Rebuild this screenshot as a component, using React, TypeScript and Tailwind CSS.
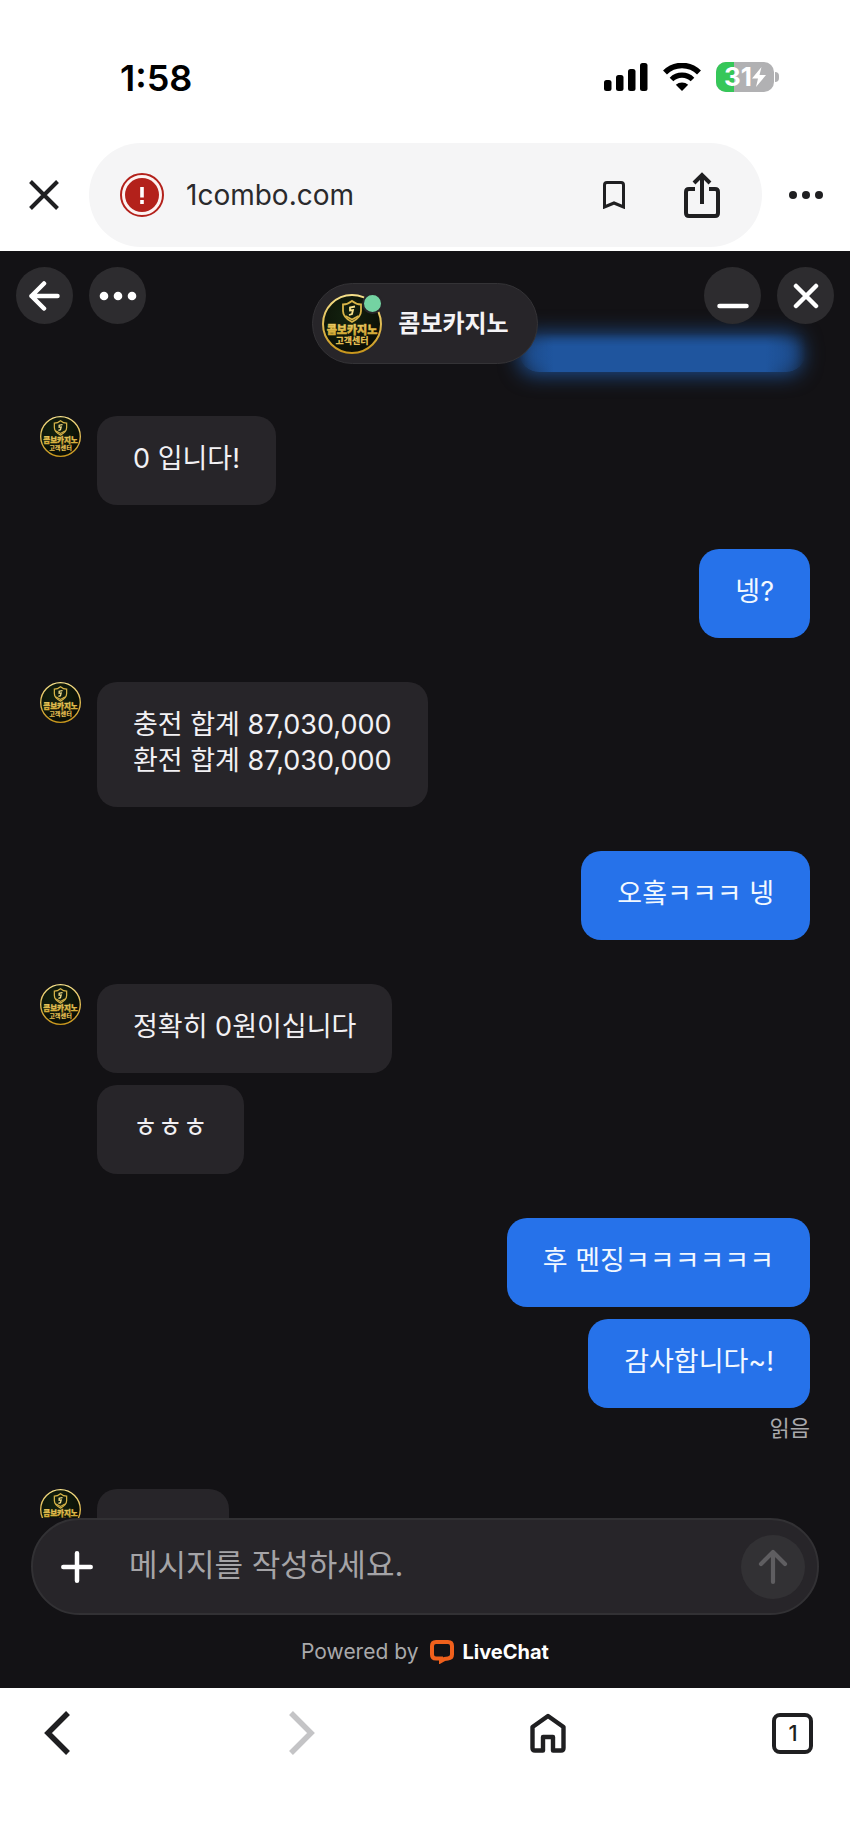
import { useState } from 'react'

type Group = {
  id: number
  from: 'agent' | 'me'
  messages: string[]
  read?: boolean
  pending?: boolean
}

const groups: Group[] = [
  { id: 1, from: 'agent', messages: ['0 입니다!'] },
  { id: 2, from: 'me', messages: ['넹?'] },
  { id: 3, from: 'agent', messages: ['충전 합계 87,030,000\n환전 합계 87,030,000'] },
  { id: 4, from: 'me', messages: ['오홐ㅋㅋㅋ 넹'] },
  { id: 5, from: 'agent', messages: ['정확히 0원이십니다', 'ㅎㅎㅎ'] },
  { id: 6, from: 'me', messages: ['후 멘징ㅋㅋㅋㅋㅋㅋ', '감사합니다~!'], read: true },
  { id: 7, from: 'agent', messages: [], pending: true },
]

function Avatar({ className }: { className: string }) {
  return (
    <svg viewBox="0 0 60 60" className={className} aria-hidden="true">
      <defs>
        <linearGradient id="gold" x1="0" y1="0" x2="0" y2="1">
          <stop offset="0" stopColor="#f6e08a" />
          <stop offset="1" stopColor="#c8961c" />
        </linearGradient>
        <radialGradient id="felt" cx="0.4" cy="0.35" r="0.7">
          <stop offset="0" stopColor="#13220f" />
          <stop offset="1" stopColor="#0a0d05" />
        </radialGradient>
      </defs>
      <circle cx="30" cy="30" r="29" fill="url(#felt)" stroke="url(#gold)" strokeWidth="2" />
      <path d="M30 7 C27 9.500 24 10.500 21 10.500 V17 C21 22 25 25.500 30 28 C35 25.500 39 22 39 17 V10.500 C36 10.500 33 9.500 30 7 Z" fill="none" stroke="#d9b548" strokeWidth="1.800" />
      <path d="M33 12.500 L28 13.500 V16.500 L31 16 L30 20 L27 21" fill="none" stroke="#f6e08a" strokeWidth="1.800" />
      <path d="M23.500 22 L30 25.500 L36.500 22" fill="none" stroke="#d9b548" strokeWidth="1.600" />
      <text x="30" y="40" textAnchor="middle" fontSize="11" fill="url(#gold)" stroke="#dcb540" strokeWidth="0.500" className="font-['Noto_Sans_CJK_KR',sans-serif] font-black">
        콤보카지노
      </text>
      <text x="30" y="50" textAnchor="middle" fontSize="9" fill="#e3bd52" className="font-['Noto_Sans_CJK_KR',sans-serif] font-black">
        고객센터
      </text>
    </svg>
  )
}

function StatusBar() {
  return (
    <div className="flex h-[143px] shrink-0 items-start justify-between pt-[58px] pr-[71px] pl-[120px]">
      <span className="text-[36px] leading-10 font-semibold text-black">1:58</span>
      <div className="flex h-[38px] items-center gap-[15px]">
        <svg viewBox="0 0 44 28" className="h-7 w-11" fill="#000">
          <rect x="0" y="17" width="7.500" height="11" rx="2.500" />
          <rect x="12" y="12" width="7.500" height="16" rx="2.500" />
          <rect x="24" y="6" width="7.500" height="22" rx="2.500" />
          <rect x="36" y="0" width="7.500" height="28" rx="2.500" />
        </svg>
        <svg viewBox="0 0 38 28" className="h-7 w-[38px]">
          <path d="M2 9.500 A24 24 0 0 1 36 9.500" fill="none" stroke="#000" strokeWidth="5.500" />
          <path d="M8.500 16.500 A15 15 0 0 1 29.500 16.500" fill="none" stroke="#000" strokeWidth="5.200" />
          <path d="M19 28 L12.800 21.700 A9.500 9.500 0 0 1 25.200 21.700 Z" fill="#000" />
        </svg>
        <div className="flex items-center gap-px">
          <div className="relative flex h-[30px] w-[58px] items-center justify-center overflow-hidden rounded-[10px] bg-[#b1b1b3]">
            <div className="absolute inset-y-0 left-0 w-[31%] bg-[#36c759]" />
            <span className="relative text-[26px] leading-[30px] font-bold text-white">31</span>
            <svg viewBox="0 0 14 20" className="relative h-5 w-[14px]" fill="#fff">
              <path d="M9.500 0 L0 11.500 H6 L4 20 L14 8 H7.500 Z" />
            </svg>
          </div>
          <div className="h-[10px] w-1 rounded-r-full bg-[#b1b1b3]" />
        </div>
      </div>
    </div>
  )
}

function AddressBar() {
  return (
    <div className="flex shrink-0 items-center pr-5 pb-1 pl-5 text-[#1f1f21]">
      <button aria-label="Close tab" className="flex size-12 items-center justify-center">
        <svg viewBox="0 0 30 30" className="size-[30px]" stroke="currentColor" strokeWidth="4">
          <path d="M1.500 1.500 L28.500 28.500 M28.500 1.500 L1.500 28.500" />
        </svg>
      </button>
      <div className="mr-5 ml-[21px] flex h-[104px] flex-1 items-center rounded-full bg-[#f5f5f6] pr-9 pl-[31px]">
        <svg viewBox="0 0 44 44" className="size-11">
          <circle cx="22" cy="22" r="21" fill="#fdf3f2" stroke="#b3211b" strokeWidth="2" />
          <circle cx="22" cy="22" r="17" fill="#b3211b" />
          <path d="M22 14 V24.500 M22 27 V31" stroke="#fff" strokeWidth="3.600" />
        </svg>
        <span className="ml-[22px] flex-1 text-[28px] leading-9 text-[#2a2a2c]">1combo.com</span>
        <button aria-label="Bookmark" className="flex size-12 items-center justify-center">
          <svg viewBox="0 0 24 28" className="h-7 w-6" fill="none" stroke="currentColor" strokeWidth="3">
            <path d="M2.500 26 V4 Q2.500 1.500 5 1.500 H19 Q21.500 1.500 21.500 4 V26 L12 22 Z" />
          </svg>
        </button>
        <button aria-label="Share" className="ml-10 flex size-12 items-center justify-center">
          <svg viewBox="0 0 36 48" className="h-12 w-9" fill="none" stroke="currentColor" strokeWidth="4">
            <path d="M11 18 H5 Q2 18 2 21 V42 Q2 45 5 45 H31 Q34 45 34 42 V21 Q34 18 31 18 H25" />
            <path d="M18 33 V4 M10 12 L18 4 L26 12" />
          </svg>
        </button>
      </div>
      <button aria-label="More options" className="flex size-12 items-center justify-center">
        <svg viewBox="0 0 34 8" className="h-2 w-[34px]" fill="currentColor">
          <circle cx="4" cy="4" r="4" />
          <circle cx="17" cy="4" r="4" />
          <circle cx="30" cy="4" r="4" />
        </svg>
      </button>
    </div>
  )
}

const roundButton = 'flex size-[57px] items-center justify-center rounded-full bg-[#2d2c2f] text-white'

function ChatHeader() {
  return (
    <header className="relative grid shrink-0 grid-cols-[1fr_auto_1fr] items-start px-4 pt-4 pb-2">
      {/* Outgoing bubble blurred under the header */}
      <div className="absolute top-[82px] right-12 left-[61%] h-[42px] rounded-2xl bg-[#1d4c8c] blur-[10px]" />
      <div className="absolute top-[82px] right-11 left-[61%] h-[39px] rounded-b-[20px] bg-[linear-gradient(to_right,transparent,#1f559e_12%,#1f559e_86%,transparent)] mask-t-from-65% mask-t-to-100%" />

      <div className="relative flex gap-4">
        <button aria-label="Back" className={roundButton}>
          <svg viewBox="0 0 32 30" className="h-[30px] w-8" fill="none" stroke="currentColor" strokeWidth="4.500" strokeLinecap="round" strokeLinejoin="round">
            <path d="M28.500 15 H2.500 M15 2.500 L2.500 15 L15 27.500" />
          </svg>
        </button>
        <button aria-label="Menu" className={roundButton}>
          <svg viewBox="0 0 38 10" className="h-[10px] w-[38px]" fill="currentColor">
            <circle cx="5" cy="5" r="4.300" />
            <circle cx="19" cy="5" r="4.300" />
            <circle cx="33" cy="5" r="4.300" />
          </svg>
        </button>
      </div>

      <div className="relative mt-4 flex h-[81px] items-center gap-4 rounded-full border border-[#343336] bg-[#272529] pr-7 pl-[9px]">
        <div className="relative">
          <Avatar className="size-[60px]" />
          <span className="absolute -top-px -right-px size-[21px] rounded-full border-2 border-[#272529] bg-[#74d3a2]" />
        </div>
        <h1 className="text-[24px] leading-8 font-bold text-[#f4f3f6]">콤보카지노</h1>
      </div>

      <div className="relative flex justify-end gap-4">
        <button aria-label="Minimize" className={roundButton}>
          <svg viewBox="0 0 32 32" className="size-8" stroke="currentColor" strokeWidth="4.500" strokeLinecap="round">
            <path d="M2.500 26 H29.500" />
          </svg>
        </button>
        <button aria-label="Close chat" className={roundButton}>
          <svg viewBox="0 0 26 26" className="size-[26px]" stroke="currentColor" strokeWidth="4.500" strokeLinecap="round">
            <path d="M3 3 L23 23 M23 3 L3 23" />
          </svg>
        </button>
      </div>
    </header>
  )
}

function MessageGroup({ group }: { group: Group }) {
  if (group.from === 'me') {
    return (
      <div className="flex flex-col items-end gap-3">
        {group.messages.map((text) => (
          <p key={text} className="rounded-[20px] bg-[#2672ea] px-9 pt-[25px] pb-7 text-[27px] leading-9 whitespace-pre-line text-[#f2f8ff]">
            {text}
          </p>
        ))}
        {group.read && <span className="-mt-2 text-[22px] leading-[33px] text-[#a9a9ab]">읽음</span>}
      </div>
    )
  }
  return (
    <div className="flex items-start gap-4">
      <Avatar className="size-[41px] shrink-0" />
      <div className="flex flex-col items-start gap-3">
        {group.messages.map((text) => (
          <p key={text} className="rounded-[20px] bg-[#272529] px-9 pt-[25px] pb-7 text-[27px] leading-9 whitespace-pre-line text-[#f2f1f4]">
            {text}
          </p>
        ))}
        {group.pending && <div className="h-[89px] w-[132px] rounded-[20px] bg-[#272529]" />}
      </div>
    </div>
  )
}

function Composer() {
  const [draft, setDraft] = useState('')

  return (
    <form
      className="mx-[31px] flex h-[97px] shrink-0 items-center rounded-full border-2 border-[#323134] bg-[#272529] pr-3 pl-5"
      onSubmit={(e) => {
        e.preventDefault()
        setDraft('')
      }}
    >
      <button type="button" aria-label="Attach" className="flex size-12 items-center justify-center text-white">
        <svg viewBox="0 0 32 32" className="size-8" stroke="currentColor" strokeWidth="4.500" strokeLinecap="round">
          <path d="M16 2.300 V29.700 M2.300 16 H29.700" />
        </svg>
      </button>
      <input
        type="text"
        aria-label="메시지를 작성하세요."
        placeholder="메시지를 작성하세요."
        value={draft}
        onChange={(e) => setDraft(e.target.value)}
        className="ml-7 min-w-0 flex-1 bg-transparent pb-1 text-[31px] leading-10 text-white outline-none placeholder:text-[#a5a4a7]"
      />
      <button type="submit" aria-label="Send" className="flex size-16 items-center justify-center rounded-full bg-[#323134] text-[#5f5e61]">
        <svg viewBox="0 0 30 36" className="h-9 w-[30px]" fill="none" stroke="currentColor" strokeWidth="4.200" strokeLinecap="round" strokeLinejoin="round">
          <path d="M15 33 V3 M3 15 L15 3 L27 15" />
        </svg>
      </button>
    </form>
  )
}

function BrowserNav() {
  const item = 'flex size-12 items-center justify-center'
  return (
    <nav className="flex h-[158px] shrink-0 items-start justify-between px-[33px] pt-[21px] text-[#1f1f21]">
      <button aria-label="Go back" className={item}>
        <svg viewBox="0 0 26 44" className="h-11 w-[26px]" fill="none" stroke="currentColor" strokeWidth="5.500">
          <path d="M24 2 L4 22 L24 42" />
        </svg>
      </button>
      <button aria-label="Go forward" disabled className={`${item} text-[#c4c4c6]`}>
        <svg viewBox="0 0 26 44" className="h-11 w-[26px]" fill="none" stroke="currentColor" strokeWidth="5.500">
          <path d="M2 2 L22 22 L2 42" />
        </svg>
      </button>
      <button aria-label="Home" className={item}>
        <svg viewBox="0 0 36 40" className="h-10 w-9" fill="none" stroke="currentColor" strokeWidth="4.400" strokeLinejoin="round">
          <path d="M18 3 L33.500 14 V35 Q33.500 37.500 31 37.500 H23 V24 H13 V37.500 H5 Q2.500 37.500 2.500 35 V14 Z" />
        </svg>
      </button>
      <button aria-label="Tabs" className={item}>
        <span className="flex size-[41px] items-center justify-center rounded-lg border-4 border-[#1f1f21] text-[22px] leading-none font-medium">
          1
        </span>
      </button>
    </nav>
  )
}

export default function App() {
  return (
    <div className="flex h-screen flex-col bg-white font-['Inter','Noto_Sans_CJK_KR',sans-serif]">
      <StatusBar />
      <AddressBar />

      <main className="flex min-h-0 flex-1 flex-col bg-[#131215]">
        <ChatHeader />
        <section className="flex min-h-0 flex-1 flex-col gap-11 overflow-y-auto px-10 pt-11 [scrollbar-width:none]">
          {groups.map((group) => (
            <MessageGroup key={group.id} group={group} />
          ))}
        </section>
        <Composer />
        <footer className="flex h-[73px] shrink-0 items-center justify-center gap-3 text-[#a9a9ab]">
          <span className="text-[21px] leading-7">Powered by</span>
          <a href="#livechat" className="flex items-center gap-2 text-[20px] leading-7 font-bold text-white">
            <svg viewBox="0 0 24 24" className="size-6" fill="none" stroke="#f0601c" strokeWidth="4">
              <path d="M6 2 H18 Q22 2 22 6 V14.500 Q22 18 18 18.500 L14.500 19 L11 21 V18.500 H6 Q2 18.500 2 14.500 V6 Q2 2 6 2 Z" />
            </svg>
            LiveChat
          </a>
        </footer>
      </main>

      <BrowserNav />
    </div>
  )
}
